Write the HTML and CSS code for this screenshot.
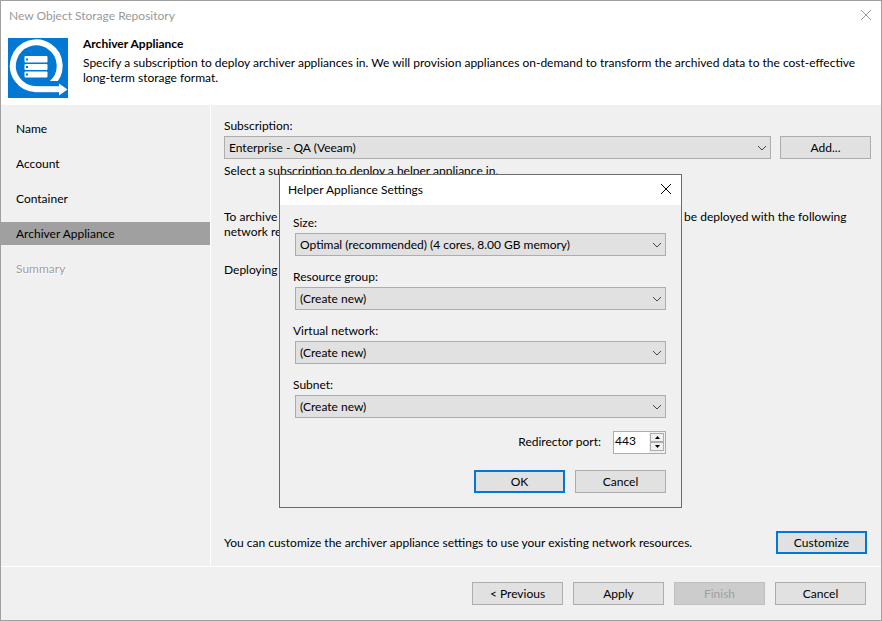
FILE: index.html
```
<!DOCTYPE html>
<html lang="en">

<head>
    <meta charset="utf-8">
    <meta name="viewport" content="width=device-width, initial-scale=1">
    <title>New Object Storage Repository</title>
    <link rel="stylesheet" href="styles.css">
</head>

<body>

    <div class="window">
        <!-- Title bar -->
        <div class="titlebar">
            <span class="titlebar-text">New Object Storage Repository</span>
            <button class="close-button" type="button" aria-label="Close">
                <svg width="12" height="12" viewBox="0 0 12 12"><path d="M1 1L11 11M11 1L1 11" /></svg>
            </button>
        </div>

        <!-- Step header -->
        <header class="header">
            <svg class="logo" width="60" height="60" viewBox="0 0 60 60">
                <rect width="60" height="60" fill="#0078d4" />
                <path d="M43 46A23.400 23.400 0 1 0 28 51.200" fill="none" stroke="#fff" stroke-width="6" />
                <rect x="38" y="43" width="14" height="6" fill="#0078d4" />
                <path d="M27.500 51.200H52" stroke="#fff" stroke-width="6" />
                <path d="M51 45.500L59.500 51.500L51 57.500Z" fill="#fff" />
                <rect x="16.500" y="18" width="23" height="6.500" rx="1" fill="#fff" />
                <rect x="16.500" y="26" width="23" height="6" rx="1" fill="#fff" />
                <rect x="16.500" y="33.500" width="23" height="6" rx="1" fill="#fff" />
                <path d="M18 21.500H20M18 29H20M18 36.500H20" stroke="#0078d4" stroke-width="2" />
            </svg>
            <div class="header-text">
                <h1>Archiver Appliance</h1>
                <p>Specify a subscription to deploy archiver appliances in. We will provision appliances on-demand to transform the archived data to the cost-effective long-term storage format.</p>
            </div>
        </header>

        <div class="main">
            <!-- Wizard steps -->
            <ul class="steps">
                <li>Name</li>
                <li>Account</li>
                <li>Container</li>
                <li class="active">Archiver Appliance</li>
                <li class="disabled">Summary</li>
            </ul>

            <div class="content">
                <label for="subscription">Subscription:</label>
                <div class="subscription-row">
                    <div class="select">
                        <select id="subscription">
                            <option>Enterprise - QA (Veeam)</option>
                        </select>
                        <svg width="10" height="6" viewBox="0 0 10 6"><path d="M1 1L5 5L9 1" /></svg>
                    </div>
                    <button class="btn" type="button">Add...</button>
                </div>
                <p class="hint">Select a subscription to deploy a helper appliance in.</p>
                <p class="info">To archive the backup data onto cloud object storage, a temporary helper appliance will be deployed with the following network resources:</p>
                <p class="status">Deploying to default</p>

                <div class="customize-row">
                    <p>You can customize the archiver appliance settings to use your existing network resources.</p>
                    <button class="btn default" type="button">Customize</button>
                </div>
            </div>
        </div>

        <!-- Wizard buttons -->
        <footer class="footer">
            <button class="btn" type="button">&lt; Previous</button>
            <button class="btn" type="button">Apply</button>
            <button class="btn" type="button" disabled>Finish</button>
            <button class="btn" type="button">Cancel</button>
        </footer>

        <!-- Helper appliance popup -->
        <dialog class="popup" open aria-labelledby="popupTitle">
            <div class="titlebar">
                <span class="titlebar-text" id="popupTitle">Helper Appliance Settings</span>
                <button class="close-button" type="button" aria-label="Close">
                    <svg width="12" height="12" viewBox="0 0 12 12"><path d="M1 1L11 11M11 1L1 11" /></svg>
                </button>
            </div>

            <form class="popup-form" onsubmit="return false;">
                <div class="field">
                    <label for="size">Size:</label>
                    <div class="select">
                        <select id="size">
                            <option>Optimal (recommended) (4 cores, 8.00 GB memory)</option>
                        </select>
                        <svg width="10" height="6" viewBox="0 0 10 6"><path d="M1 1L5 5L9 1" /></svg>
                    </div>
                </div>
                <div class="field">
                    <label for="resourceGroup">Resource group:</label>
                    <div class="select">
                        <select id="resourceGroup">
                            <option>(Create new)</option>
                        </select>
                        <svg width="10" height="6" viewBox="0 0 10 6"><path d="M1 1L5 5L9 1" /></svg>
                    </div>
                </div>
                <div class="field">
                    <label for="network">Virtual network:</label>
                    <div class="select">
                        <select id="network">
                            <option>(Create new)</option>
                        </select>
                        <svg width="10" height="6" viewBox="0 0 10 6"><path d="M1 1L5 5L9 1" /></svg>
                    </div>
                </div>
                <div class="field">
                    <label for="subnet">Subnet:</label>
                    <div class="select">
                        <select id="subnet">
                            <option>(Create new)</option>
                        </select>
                        <svg width="10" height="6" viewBox="0 0 10 6"><path d="M1 1L5 5L9 1" /></svg>
                    </div>
                </div>

                <div class="port-row">
                    <label for="port">Redirector port:</label>
                    <div class="spinner">
                        <input type="text" id="port" value="443">
                        <div class="spinner-buttons">
                            <button type="button" aria-label="Increase">
                                <svg width="5" height="3" viewBox="0 0 5 3"><path d="M0 3L2.500 0L5 3Z" /></svg>
                            </button>
                            <button type="button" aria-label="Decrease">
                                <svg width="5" height="3" viewBox="0 0 5 3"><path d="M0 0L2.500 3L5 0Z" /></svg>
                            </button>
                        </div>
                    </div>
                </div>

                <div class="popup-buttons">
                    <button class="btn default" type="submit">OK</button>
                    <button class="btn" type="button">Cancel</button>
                </div>
            </form>
        </dialog>
    </div>

</body>

</html>
```

FILE: styles.css
```
* {
    box-sizing: border-box;
}

body {
    margin: 0;
    font-family: Lato, "Open Sans", sans-serif;
    font-size: 12px;
    line-height: 15px;
    color: #000;
}

h1,
p,
ul {
    margin: 0;
    padding: 0;
}

button,
input,
select {
    font: inherit;
    color: inherit;
}

.window {
    position: relative;
    display: flex;
    flex-direction: column;
    min-height: 100vh;
    background-color: #f0f0f0;
    border: 1px solid #a0a0a0;
}

/* Title bars */
.titlebar {
    display: flex;
    align-items: center;
    justify-content: space-between;
    height: 30px;
    padding: 0 9px 2px 8px;
    background-color: #fff;
}

.window > .titlebar {
    color: #999;
}

.close-button {
    display: flex;
    padding: 0;
    border: none;
    background: none;
}

.close-button svg {
    fill: none;
    stroke: currentColor;
}

/* Step header */
.header {
    display: flex;
    align-items: flex-end;
    gap: 15px;
    padding: 5px 7px 7px 7px;
    background-color: #fff;
}

.logo {
    flex: none;
    margin-top: 2px;
}

.header-text {
    align-self: flex-start;
}

.header-text h1 {
    margin-bottom: 4px;
    font-size: 12px;
    line-height: 15px;
}

.main {
    display: flex;
    flex: 1;
}

/* Wizard steps */
.steps {
    display: flex;
    flex-direction: column;
    flex: none;
    gap: 12px;
    width: 210px;
    padding-top: 12px;
    border-right: 1px solid #fff;
    list-style: none;
}

.steps li {
    padding: 4px 15px;
}

.steps .active {
    background-color: #a0a0a0;
}

.steps .disabled {
    color: #a0a0a0;
    text-shadow: 1px 1px #fff;
}

/* Step content */
.content {
    display: flex;
    flex-direction: column;
    flex: 1;
    min-width: 0;
    padding: 13px 10px 12px 13px;
}

.subscription-row {
    display: flex;
    gap: 9px;
    margin-top: 3px;
}

.hint {
    margin-top: 4px;
}

.info {
    margin-top: 31px;
}

.status {
    margin-top: 23px;
}

.customize-row {
    display: flex;
    align-items: center;
    justify-content: space-between;
    margin-top: auto;
    padding-right: 4px;
}

/* Drop-downs */
.select {
    position: relative;
    flex: 1;
}

.select select {
    display: block;
    width: 100%;
    height: 23px;
    padding: 0 20px 0 4px;
    border: 1px solid #adadad;
    border-radius: 0;
    background-color: #e1e1e1;
    appearance: none;
}

.select svg {
    position: absolute;
    top: 9px;
    right: 4px;
    fill: none;
    stroke: #444;
    pointer-events: none;
}

/* Buttons */
.btn {
    flex: none;
    width: 91px;
    height: 23px;
    padding: 0;
    border: 1px solid #adadad;
    background-color: #e1e1e1;
}

.btn.default {
    border: 2px solid #0078d7;
}

.btn:disabled {
    border-color: #bfbfbf;
    background-color: #ccc;
    color: #a0a0a0;
}

.footer {
    display: flex;
    justify-content: flex-end;
    gap: 10px;
    padding: 15px;
    border-top: 1px solid #fff;
}

/* Popup over the wizard */
.popup {
    position: absolute;
    top: 173px;
    right: 199px;
    left: auto;
    width: 403px;
    margin: 0;
    padding: 0;
    border: 1px solid #6b6b6b;
    background-color: #f0f0f0;
    color: #000;
}

.popup-form {
    display: flex;
    flex-direction: column;
    padding: 10px 15px 14px 13px;
}

.field {
    display: flex;
    flex-direction: column;
    gap: 3px;
}

.field + .field {
    margin-top: 13px;
}

.field .select {
    margin-left: 2px;
}

.port-row {
    display: flex;
    align-items: center;
    justify-content: flex-end;
    gap: 12px;
    margin-top: 13px;
}

.port-row label {
    padding-bottom: 3px;
}

.spinner {
    display: flex;
    width: 53px;
    height: 23px;
    border: 1px solid #adadad;
    background-color: #fff;
}

.spinner input {
    flex: 1;
    min-width: 0;
    padding: 0 0 4px 1px;
    border: none;
    background: none;
}

.spinner-buttons {
    display: flex;
    flex-direction: column;
    width: 16px;
    padding: 1px 1px 2px;
    background-color: #f0f0f0;
}

.spinner-buttons button {
    display: flex;
    align-items: center;
    justify-content: center;
    flex: 1;
    padding: 0;
    border: 1px solid #adadad;
    background-color: #f0f0f0;
}

.popup-buttons {
    display: flex;
    justify-content: flex-end;
    gap: 10px;
    margin-top: 16px;
}
```
